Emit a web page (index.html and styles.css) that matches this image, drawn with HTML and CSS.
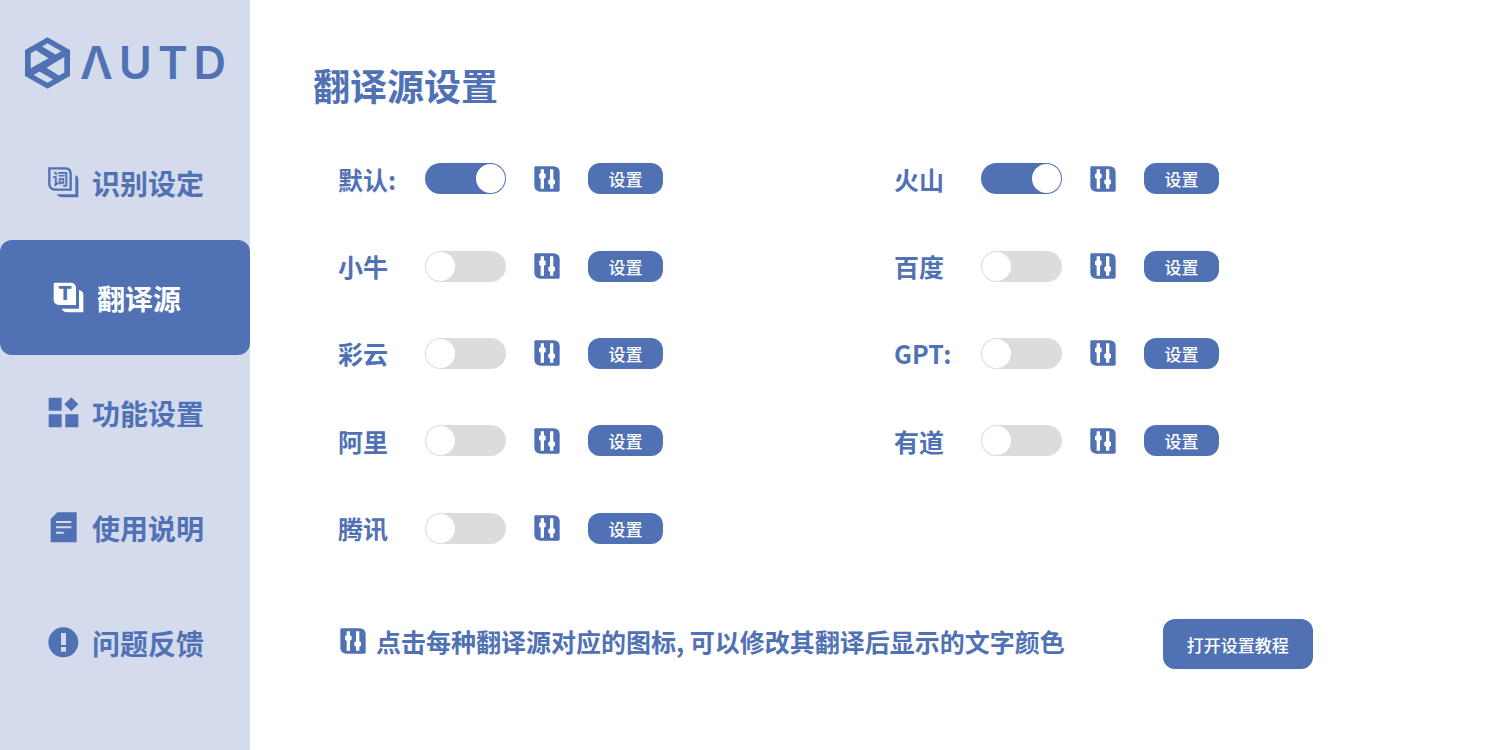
FILE: index.html
```html
<!DOCTYPE html>
<html lang="zh-CN">
<head>
<meta charset="utf-8">
<meta name="viewport" content="width=device-width, initial-scale=1">
<title>翻译源设置</title>
<link rel="stylesheet" href="styles.css">
</head>
<body>
<svg class="defs" aria-hidden="true">
  <symbol id="sliders" viewBox="0 0 78 78">
    <path fill="currentColor" d="M5 1H60Q77 3 77 19V73Q77 77 73 77H18Q2 75 1 60V5Q1 1 5 1Z"/>
    <path fill="none" stroke="#fff" stroke-width="10" d="M25 10V68M53 10V68"/>
    <path fill="#fff" d="M25 19L35 25V35L25 41L15 35V25ZM53 37L63 43V53L53 59L43 53V43Z"/>
  </symbol>
</svg>
<div class="app">
  <aside class="sidebar">
    <div class="logo">
      <svg class="logo-mark" viewBox="0 0 134 154" aria-hidden="true">
        <path fill="currentColor" fill-rule="evenodd" d="M67 0L134 38V116L67 154L0 116V38ZM67 18L51 28L91 52L108 42ZM32 39L17 48V93L70 63ZM117 59L64 91L101 114L117 105ZM43 102L26 113L67 136L84 126Z"/>
      </svg>
      <div class="wordmark"><span>Λ</span><span>U</span><span>T</span><span>D</span></div>
    </div>
    <nav class="nav">
      <a class="nav-item" href="#recognition">
        <svg class="nav-icon" viewBox="0 0 93 93" aria-hidden="true">
          <path fill="none" stroke="currentColor" stroke-width="7" d="M4 4H54Q68 6 68 20V68H20Q6 66 4 52Z"/>
          <path fill="currentColor" d="M82 24Q91 28 91 35V91H43Q30 90 26 82H82Z"/>
          <text class="icon-word" x="37" y="54" text-anchor="middle">词</text>
        </svg>
        <span>识别设定</span>
      </a>
      <a class="nav-item active" href="#sources" aria-current="page">
        <svg class="nav-icon" viewBox="0 0 93 93" aria-hidden="true">
          <path fill="currentColor" d="M6 2H54Q69 4 69 18V69H18Q3 67 2 54V6Q2 2 6 2Z"/>
          <path fill="currentColor" d="M78 24Q91 28 91 38V91H43Q30 90 26 80H78Z"/>
          <text class="icon-letter" x="36" y="55" text-anchor="middle">T</text>
        </svg>
        <span>翻译源</span>
      </a>
      <a class="nav-item" href="#features">
        <svg class="nav-icon" viewBox="0 0 93 93" aria-hidden="true">
          <path fill="currentColor" d="M2 2H41V41H2ZM2 52H41V91H2ZM52 52H91V91H52ZM70 1L91 22L70 43L49 22Z"/>
        </svg>
        <span>功能设置</span>
      </a>
      <a class="nav-item" href="#manual">
        <svg class="nav-icon" viewBox="0 0 93 93" aria-hidden="true">
          <path fill="currentColor" d="M28 1H86V91H8V21Z"/>
          <path stroke="#d4dbec" stroke-width="6" d="M24 30H70M24 46H70M24 62H47"/>
        </svg>
        <span>使用说明</span>
      </a>
      <a class="nav-item" href="#feedback">
        <svg class="nav-icon" viewBox="0 0 93 93" aria-hidden="true">
          <circle cx="46" cy="46" r="45" fill="currentColor"/>
          <path fill="#d4dbec" d="M39 18H54V54H39ZM39 60H54V74H39Z"/>
        </svg>
        <span>问题反馈</span>
      </a>
    </nav>
  </aside>
  <main class="main">
    <h1 class="title">翻译源设置</h1>
    <div class="sources">
      <div class="source"><label for="s1">默认:</label><input class="switch" id="s1" type="checkbox" checked><button class="color-btn" type="button" aria-label="文字颜色"><svg><use href="#sliders"/></svg></button><button class="set-btn" type="button">设置</button></div>
      <div class="source"><label for="s2">火山</label><input class="switch" id="s2" type="checkbox" checked><button class="color-btn" type="button" aria-label="文字颜色"><svg><use href="#sliders"/></svg></button><button class="set-btn" type="button">设置</button></div>
      <div class="source"><label for="s3">小牛</label><input class="switch" id="s3" type="checkbox"><button class="color-btn" type="button" aria-label="文字颜色"><svg><use href="#sliders"/></svg></button><button class="set-btn" type="button">设置</button></div>
      <div class="source"><label for="s4">百度</label><input class="switch" id="s4" type="checkbox"><button class="color-btn" type="button" aria-label="文字颜色"><svg><use href="#sliders"/></svg></button><button class="set-btn" type="button">设置</button></div>
      <div class="source"><label for="s5">彩云</label><input class="switch" id="s5" type="checkbox"><button class="color-btn" type="button" aria-label="文字颜色"><svg><use href="#sliders"/></svg></button><button class="set-btn" type="button">设置</button></div>
      <div class="source"><label for="s6">GPT:</label><input class="switch" id="s6" type="checkbox"><button class="color-btn" type="button" aria-label="文字颜色"><svg><use href="#sliders"/></svg></button><button class="set-btn" type="button">设置</button></div>
      <div class="source"><label for="s7">阿里</label><input class="switch" id="s7" type="checkbox"><button class="color-btn" type="button" aria-label="文字颜色"><svg><use href="#sliders"/></svg></button><button class="set-btn" type="button">设置</button></div>
      <div class="source"><label for="s8">有道</label><input class="switch" id="s8" type="checkbox"><button class="color-btn" type="button" aria-label="文字颜色"><svg><use href="#sliders"/></svg></button><button class="set-btn" type="button">设置</button></div>
      <div class="source"><label for="s9">腾讯</label><input class="switch" id="s9" type="checkbox"><button class="color-btn" type="button" aria-label="文字颜色"><svg><use href="#sliders"/></svg></button><button class="set-btn" type="button">设置</button></div>
    </div>
    <div class="footer">
      <div class="hint">
        <svg class="hint-icon" aria-hidden="true"><use href="#sliders"/></svg>
        <span>点击每种翻译源对应的图标, 可以修改其翻译后显示的文字颜色</span>
      </div>
      <button class="guide-btn" type="button">打开设置教程</button>
    </div>
  </main>
</div>
</body>
</html>
```

FILE: styles.css
```css
* {
  box-sizing: border-box;
}

body {
  margin: 0;
  color: #5072b5;
  background: #fff;
  font-family: "Noto Sans CJK SC", sans-serif;
  font-weight: 700;
}

button {
  padding: 0;
  border: 0;
  color: #fff;
  background: #5072b5;
  font: inherit;
  font-weight: 500;
  cursor: pointer;
}

.defs {
  display: none;
}

.app {
  display: flex;
  min-height: 100vh;
}

.sidebar {
  flex: 0 0 250px;
  background: #d4dbec;
}

.logo {
  display: flex;
  align-items: center;
  gap: 10px;
  height: 125px;
  padding-left: 25px;
}

.logo-mark {
  width: 45px;
  height: 52px;
}

.wordmark {
  display: flex;
  gap: 6px;
  font: 600 45px/52px Inter, sans-serif;
}

.nav-item {
  display: flex;
  align-items: center;
  gap: 13px;
  height: 115px;
  padding-left: 48px;
  color: inherit;
  font-size: 28px;
  line-height: 40px;
  text-decoration: none;
}

.nav-item.active {
  padding-left: 53px;
  border-radius: 12px;
  color: #fff;
  background: #5072b5;
}

.nav-icon {
  width: 31px;
  height: 31px;
  overflow: visible;
}

.icon-word {
  fill: currentColor;
  font-size: 48px;
}

.icon-letter {
  fill: #5072b5;
  font: 700 56px "DejaVu Sans", sans-serif;
}

.main {
  flex: 1;
  padding: 58px 50px 40px 88px;
}

.title {
  margin: 0 0 22px -25px;
  font-size: 37px;
  line-height: 55px;
}

.sources {
  display: grid;
  grid-template-columns: 1fr 1fr;
  grid-auto-rows: 1fr;
  min-height: 437px;
}

.source {
  display: flex;
  align-items: center;
}

.source label {
  width: 87px;
  font-size: 25px;
  line-height: 36px;
}

.switch {
  appearance: none;
  display: flex;
  width: 81px;
  height: 31px;
  margin: 0 28px 0 0;
  padding: 1px;
  border-radius: 16px;
  background: #dcdcdc;
  cursor: pointer;
}

.switch::before {
  content: "";
  width: 29px;
  height: 29px;
  border-radius: 50%;
  background: #fff;
}

.switch:checked {
  justify-content: flex-end;
  background: #5072b5;
}

.color-btn {
  display: flex;
  margin-right: 28px;
  color: #5072b5;
  background: none;
}

.color-btn svg,
.hint-icon {
  width: 26px;
  height: 26px;
}

.set-btn {
  width: 75px;
  height: 31px;
  border-radius: 12px;
  font-size: 17px;
  line-height: 31px;
}

.footer {
  display: flex;
  align-items: center;
  margin-top: 47px;
  padding-left: 2px;
}

.hint {
  display: flex;
  align-items: center;
  gap: 10px;
  margin-right: 98px;
  padding-bottom: 6px;
  font-size: 25px;
  line-height: 36px;
}

.guide-btn {
  width: 150px;
  height: 50px;
  border-radius: 12px;
  font-size: 17px;
}
```
